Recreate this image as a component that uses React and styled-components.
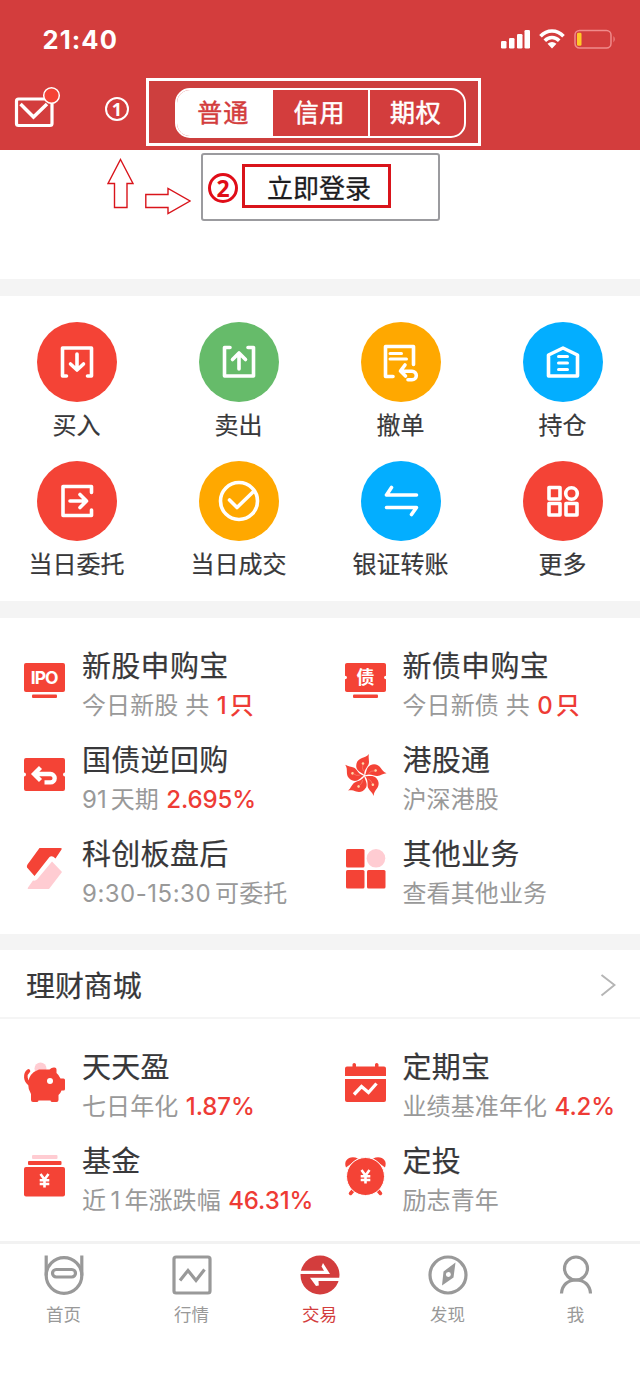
import React from "react";
import styled, { createGlobalStyle } from "styled-components";

const RED = "#f44336";
const BRAND = "#d33d3d";
const PINK = "#ffccd2";

const GlobalStyle = createGlobalStyle`
  * { box-sizing: border-box; }
  body {
    margin: 0;
    background: #fff;
    color: #38383a;
    font-family: Inter, "Noto Sans CJK SC", sans-serif;
  }
  svg { display: block; flex: none; }
`;

const Page = styled.div`
  width: 640px;
  height: 1386px;
  display: flex;
  flex-direction: column;
  overflow: hidden;
  background: #fff;
`;

const Header = styled.header`
  height: 150px;
  flex: none;
  background: ${BRAND};
  color: #fff;
`;

const StatusBar = styled.div`
  height: 78px;
  padding: 0 24px 0 42.5px;
  display: flex;
  justify-content: space-between;
`;

const Clock = styled.div`
  height: 78px;
  line-height: 80px;
  font-size: 25.5px;
  font-weight: 700;
  letter-spacing: 1.1px;
`;

const StatusIcons = styled.div`
  display: flex;
  gap: 9px;
  padding-top: 28px;
`;

const NavBar = styled.div`
  display: flex;
  align-items: flex-start;
`;

const MailSlot = styled.div`
  width: 105px;
  padding: 8px 0 0 14px;
`;

const StepBadge = styled.span`
  width: ${(p) => p.$size}px;
  height: ${(p) => p.$size}px;
  flex: none;
  display: flex;
  align-items: center;
  justify-content: center;
  border: ${(p) => p.$line}px solid currentColor;
  border-radius: 50%;
  color: ${(p) => p.$color};
  font: 700 ${(p) => p.$font}px "Noto Sans", sans-serif;
  line-height: 1;
  margin: ${(p) => p.$margin};
`;

const SegmentFrame = styled.div`
  width: 335px;
  height: 68px;
  border: 3px solid #fff;
  background: #cd3f3e;
  padding: 7px 0 0 26px;
`;

const Segments = styled.div`
  width: 291px;
  height: 50px;
  display: flex;
  border: 2px solid #fff;
  border-radius: 15px;
  overflow: hidden;
  background: ${BRAND};
`;

const Segment = styled.button`
  flex: 1;
  border: 0;
  border-left: ${(p) => (p.$first ? 0 : 2)}px solid #fff;
  padding: 0 2px 5px 0;
  background: ${(p) => (p.$active ? "#fff" : "transparent")};
  color: ${(p) => (p.$active ? BRAND : "#fff")};
  font: 400 25px "Noto Sans CJK SC", sans-serif;
  letter-spacing: 0.8px;
  line-height: 42px;
  -webkit-text-stroke: 0.5px currentColor;
`;

const LoginArea = styled.section`
  height: 129px;
  flex: none;
  display: flex;
  align-items: flex-start;
  padding: 3px 0 0 106px;
`;

const UpArrow = styled.svg`
  margin-top: 5px;
`;

const RightArrow = styled.svg`
  margin: 34px 10px 0 10px;
`;

const LoginBox = styled.div`
  width: 239px;
  height: 68px;
  border: 2px solid #9b9b9f;
  border-radius: 3px;
  display: flex;
  padding: 9px 0 0 5px;
`;

const LoginButton = styled.button`
  width: 149px;
  height: 44px;
  border: 3px solid #d9141b;
  background: #fff;
  padding: 0 0 0 5px;
  color: #1c1c1e;
  font: 400 26px "Noto Sans CJK SC", sans-serif;
  line-height: 37px;
  -webkit-text-stroke: 0.3px currentColor;
`;

const Band = styled.div`
  height: ${(p) => p.$height}px;
  flex: none;
  background: #f4f4f4;
`;

const QuickGrid = styled.section`
  height: 305px;
  flex: none;
  padding: 26px 29.5px 0 28.5px;
  display: grid;
  grid-template-columns: repeat(4, 96px);
  grid-auto-rows: 139px;
  justify-content: space-between;
`;

const QuickItem = styled.div`
  display: flex;
  flex-direction: column;
  align-items: center;
`;

const QuickCircle = styled.div`
  width: 80px;
  height: 80px;
  border-radius: 50%;
  background: ${(p) => p.$color};
  color: #fff;
  flex: none;
`;

const QuickLabel = styled.div`
  height: 40px;
  line-height: 40px;
  margin-top: 2px;
  font-size: 24px;
  font-family: "Noto Sans CJK SC", sans-serif;
  white-space: nowrap;
  -webkit-text-stroke: 0.2px currentColor;
`;

const FeatureGrid = styled.section`
  flex: none;
  height: ${(p) => p.$height}px;
  padding: 26px 0 0 24px;
  display: grid;
  grid-template-columns: 320.5px 1fr;
  grid-auto-rows: 80px;
  row-gap: 14px;
`;

const FeatureItem = styled.div`
  display: flex;
  gap: 17px;
  min-width: 0;
`;

const FeatureIcon = styled.svg`
  margin-top: 16px;
  overflow: visible;
`;

const FeatureTitle = styled.div`
  height: 40px;
  line-height: 40px;
  font-size: 29px;
  font-family: "Noto Sans CJK SC", sans-serif;
  letter-spacing: ${(p) => (p.$tight ? -0.1 : 0.3)}px;
  white-space: nowrap;
  -webkit-text-stroke: 0.2px currentColor;
`;

const FeatureNote = styled.div`
  height: 40px;
  line-height: 40px;
  margin-top: 2px;
  font-size: 24px;
  letter-spacing: 0.1px;
  color: #999;
  white-space: nowrap;
`;

const Digits = styled.span`
  letter-spacing: ${(p) => (p.$long ? 0.5 : 0)}px;
  margin-left: ${(p) => (p.$before ? 4.5 : 0)}px;
  margin-right: ${(p) => (p.$after ? 4 : 0)}px;
`;

const Accent = styled.span`
  margin-left: 0.6px;
  color: #ee3b35;
  font-weight: 500;

  ${Digits} {
    letter-spacing: -0.1px;
    margin-right: ${(p) => (p.$counted ? 3 : 0)}px;
  }
`;

const MallHeader = styled.div`
  height: 69px;
  flex: none;
  padding: 0 24px 0 26px;
  display: flex;
  align-items: center;
  justify-content: space-between;
  border-bottom: 2px solid #f5f5f5;
`;

const MallArrow = styled.svg`
  margin-top: 2px;
`;

const TabBar = styled.nav`
  height: 145px;
  flex: none;
  border-top: 3px solid #f2f2f2;
  display: flex;
`;

const Tab = styled.div`
  flex: 1;
  display: flex;
  flex-direction: column;
  align-items: center;
  padding-top: 11px;
  color: ${(p) => (p.$active ? BRAND : "#999")};
`;

const TabLabel = styled.div`
  font: 400 17.5px "Noto Sans CJK SC", sans-serif;
  line-height: 30px;
  margin-top: 4px;
  padding-right: 1px;
`;

const quickIcons = {
  buy: (
    <path d="M32.5 54.5H28.500V26.500h29V54.500H53.500M43 32.500V47.500M36.500 42.500l6.500 6 6.500-6" transform="translate(-3 -.5)" />
  ),
  sell: (
    <path d="M31 25.500h-5.500V54h29V25.500H49M40 47V31.500M33.500 37.500 40 31l6.500 6.500" />
  ),
  cancel: (
    <>
      <path d="M32 54.500H24.500V24.500h28v18" />
      <path d="M29 31.500h11.500M29 37h16.500" strokeWidth="3" />
      <path d="M44 43 39.500 49l5 5M40.500 49.200H51a4.300 4.300 0 0 1 0 8.600h-4" />
    </>
  ),
  hold: (
    <>
      <path d="M25.500 54V33L40 26l14.500 7v21z" />
      <path d="M35.500 34.500h9M35.500 41h9M35.500 47.500h9" strokeWidth="3" />
    </>
  ),
  orders: (
    <path d="M54.500 31.500V25.500H26v29h28.500V49M33 40h16M43 33.500 49.500 40 43 46.500" />
  ),
  deals: (
    <>
      <circle cx="40" cy="40" r="18.500" />
      <path d="M30.500 39 38 46.500 54 31" />
    </>
  ),
  transfer: (
    <path d="M30.500 26.500 25.500 34H55.500M25.500 46.500h30L50.500 53.500" />
  ),
  more: (
    <>
      <rect x="26" y="26.500" width="11" height="11.500" />
      <circle cx="48.500" cy="32.500" r="5.800" />
      <rect x="26" y="42.500" width="11" height="11.500" />
      <rect x="43" y="42.500" width="11" height="11.500" />
    </>
  ),
};

const QuickGlyph = ({ name }) => (
  <svg width="80" height="80" fill="none" stroke="currentColor" strokeWidth="3.600" strokeLinecap="round" strokeLinejoin="round">
    {quickIcons[name]}
  </svg>
);

const Yen = ({ x, y }) => (
  <path
    d="M-4-6.500 0-1 4-6.500M0-1V7M-4.800-.3H4.800M-4.800 3.500H4.800"
    transform={`translate(${x} ${y})`}
    stroke="#fff"
    strokeWidth="2.600"
    fill="none"
  />
);

const TICKET = "M2 0H39a2 2 0 0 1 2 2V14.500a2 2 0 0 0 0 4V31a2 2 0 0 1-2 2H2a2 2 0 0 1-2-2V18.500a2 2 0 0 0 0-4V2a2 2 0 0 1 2-2z";
const PETAL = "M19.300 21C16.500 18.500 12 17.500 11.300 13C10.800 8 13.500 5.200 17 4C20 3 22 2.500 24 0C23 3.500 24.500 6 23.800 9.500C23 13 19 15 19.300 21z";

const featureIcons = {
  ipo: (
    <>
      <rect x="0" y="3" width="41" height="29" rx="2" fill={RED} />
      <rect x="8" y="34.500" width="25" height="3.500" rx="1" fill={RED} />
      <text x="20.200" y="23.800" textAnchor="middle" fill="#fff" fontFamily="Inter" fontWeight="700" fontSize="17.500" letterSpacing="-0.900">IPO</text>
    </>
  ),
  bond: (
    <>
      <path d={TICKET} transform="translate(0 3) scale(1 .88)" fill={RED} />
      <rect x="8" y="34.500" width="25" height="3.500" rx="1" fill={RED} />
      <text x="20.500" y="24" textAnchor="middle" fill="#fff" fontFamily="Noto Sans CJK SC" fontWeight="700" fontSize="18">债</text>
    </>
  ),
  repo: (
    <>
      <path d={TICKET} transform="translate(0 4)" fill={RED} />
      <path d="M16.500 13.500 10 20 16.500 26.500M11 20H26.500a4.200 4.200 0 0 1 0 8.400H20.500" stroke="#fff" strokeWidth="4.300" fill="none" />
    </>
  ),
  hk: (
    <>
      {[0, 72, 144, 216, 288].map((a) => (
        <g key={a} transform={`rotate(${a} 19.500 21.700)`}>
          <path d={PETAL} fill={RED} />
          <path d="M18.500 17Q16.500 14 18 10.500" stroke="#f98a78" strokeWidth=".6" fill="none" />
          <circle cx="18" cy="9.500" r="1.300" fill="#ffd9a8" />
        </g>
      ))}
    </>
  ),
  star: (
    <>
      <path d="M25 41H4.500Q3 41 4 39.500L9 32.500Q11.500 33 13 31.500L28 13.500 38 24z" fill={PINK} />
      <path d="M15.500 0H36.500Q38.500 0 37.500 1.500L31.500 10.500Q28 7 25.500 9L10.500 28 3 19.500Q2.500 18 3.500 16.500z" fill={RED} />
    </>
  ),
  other: (
    <>
      <rect x="1" y="1" width="18.500" height="18.500" rx="1.500" fill={RED} />
      <circle cx="31" cy="10.300" r="9.300" fill={PINK} />
      <rect x="1" y="22" width="18.500" height="18.500" rx="1.500" fill={RED} />
      <rect x="22" y="22" width="18.500" height="18.500" rx="1.500" fill={RED} />
    </>
  ),
  piggy: (
    <>
      <circle cx="16.500" cy="7.500" r="6" fill={PINK} />
      <path d="M4.500 10C.5 13 1 20.500 6 23" stroke={RED} strokeWidth="3.600" strokeLinecap="round" fill="none" />
      <path d="M15 8.500H25.500Q28 6 30.500 6.500 32.500 6.500 32.500 8.500V12Q35 14 36.500 17.500H39.500Q41 17.500 41 19V28Q41 29.500 39.500 29.500H37.500Q36.500 32.500 34.500 34V39Q34.500 41 32.500 41H28.500Q26.500 41 26.500 39.500H14.500Q14.500 41 12.500 41H9Q7 41 7 39V33Q4 28 4 22 5 12 15 8.500z" fill={RED} />
      <circle cx="26" cy="20" r="3" fill="#fff" />
    </>
  ),
  calendar: (
    <>
      <path d="M2 5.500H7.500V3.500Q7.500 2 9.200 2T11 3.500V5.500H30V3.500Q30 2 31.700 2T33.500 3.500V5.500H39Q41 5.500 41 7.500V15H0V7.500Q0 5.500 2 5.500z" fill={RED} />
      <path d="M0 18H41V39Q41 41 39 41H2Q0 41 0 39z" fill={RED} />
      <path d="M9 33.500 16.500 25.500 23.500 31.500 31.500 22.500" stroke="#fff" strokeWidth="3.300" fill="none" />
    </>
  ),
  fund: (
    <>
      <rect x="8" y="0" width="25.500" height="4" rx="1" fill={PINK} />
      <rect x="4" y="6" width="33.500" height="4" rx="1" fill={RED} />
      <rect x="0" y="12" width="41" height="29.500" rx="2" fill={RED} />
      <Yen x={20.5} y={25.5} />
    </>
  ),
  alarm: (
    <>
      <path d="M1 12.500C-2 5 5 0 13 3.500zM40 12.500C43 5 36 0 28 3.500z" fill={RED} />
      <path d="M8.500 35 5.500 38.500M32.500 35l3 3.500" stroke={RED} strokeWidth="3.500" strokeLinecap="round" />
      <circle cx="20.500" cy="21.500" r="19" fill={RED} stroke="#fff" strokeWidth="1" />
      <Yen x={20.5} y={21.5} />
    </>
  ),
};

const tabIcons = {
  home: (
    <>
      <path d="M2.200.5V20.500M37.800.5V20.500" />
      <circle cx="20" cy="20.500" r="17.800" />
      <rect x="8.500" y="14.500" width="23" height="7.500" rx="3.700" />
    </>
  ),
  market: (
    <>
      <rect x="2" y="2" width="36" height="36" rx="2" />
      <path d="M8 25.500 16 15.500 24 25.500 32.500 14.500" />
    </>
  ),
  trade: (
    <>
      <circle cx="20" cy="20" r="19.500" fill={BRAND} stroke="none" />
      <path d="M0 15.800H24L21.500 11.500 23 8 30 19H0zM40 26H18.500L18.800 30.500 16 31 10 22.700H40z" fill="#fff" stroke="none" />
    </>
  ),
  discover: (
    <>
      <circle cx="20" cy="20" r="18" />
      <path fillRule="evenodd" d="M27.500 7.500 25.500 22.500 14 30.500 15.500 16.500zM20.300 17a2.500 2.500 0 1 0 .1 5 2.500 2.500 0 0 0-.1-5z" fill="currentColor" stroke="none" />
    </>
  ),
  me: (
    <>
      <circle cx="20" cy="13.500" r="11.500" />
      <path d="M5.500 38.500C6 30 12 25 20 25S34 30 34.500 38.500" />
    </>
  ),
};

const quickActions = [
  { label: "买入", icon: "buy", color: RED },
  { label: "卖出", icon: "sell", color: "#66bb6a" },
  { label: "撤单", icon: "cancel", color: "#ffa800" },
  { label: "持仓", icon: "hold", color: "#03aeff" },
  { label: "当日委托", icon: "orders", color: RED },
  { label: "当日成交", icon: "deals", color: "#ffa800" },
  { label: "银证转账", icon: "transfer", color: "#03aeff" },
  { label: "更多", icon: "more", color: RED },
];

const business = [
  { title: "新股申购宝", note: "今日新股 共 ", accent: "1只", icon: "ipo" },
  { title: "新债申购宝", note: "今日新债 共 ", accent: "0只", icon: "bond" },
  { title: "国债逆回购", note: "91天期 ", accent: "2.695%", icon: "repo" },
  { title: "港股通", note: "沪深港股", icon: "hk" },
  { title: "科创板盘后", note: "9:30-15:30可委托", icon: "star" },
  { title: "其他业务", note: "查看其他业务", icon: "other" },
];

const wealth = [
  { title: "天天盈", note: "七日年化 ", accent: "1.87%", icon: "piggy" },
  { title: "定期宝", note: "业绩基准年化 ", accent: "4.2%", icon: "calendar" },
  { title: "基金", note: "近1年涨跌幅 ", accent: "46.31%", icon: "fund" },
  { title: "定投", note: "励志青年", icon: "alarm" },
];

const tabs = [
  { label: "首页", icon: "home" },
  { label: "行情", icon: "market" },
  { label: "交易", icon: "trade", active: true },
  { label: "发现", icon: "discover" },
  { label: "我", icon: "me" },
];

// Adds breathing room where digits meet Chinese characters.
const Mixed = ({ text }) => {
  const parts = text.split(/([\d:.%-]+)/).filter(Boolean);
  return parts.map((part, i) =>
    /^\d/.test(part) ? (
      <Digits key={i} $long={part.length > 6} $before={i > 0} $after={i < parts.length - 1}>
        {part}
      </Digits>
    ) : (
      part
    )
  );
};

const Features = ({ items, height }) => (
  <FeatureGrid $height={height}>
    {items.map((f) => (
      <FeatureItem key={f.title}>
        <FeatureIcon width="41" height="41">{featureIcons[f.icon]}</FeatureIcon>
        <div>
          <FeatureTitle>{f.title}</FeatureTitle>
          <FeatureNote>
            <Mixed text={f.note} />
            {f.accent && (
              <Accent $counted={f.accent.endsWith("只")}>
                <Mixed text={f.accent} />
              </Accent>
            )}
          </FeatureNote>
        </div>
      </FeatureItem>
    ))}
  </FeatureGrid>
);

export default function App() {
  return (
    <Page>
      <GlobalStyle />
      <Header>
        <StatusBar>
          <Clock>21:40</Clock>
          <StatusIcons>
            <svg width="30" height="21" fill="#fff">
              <rect x="1" y="13" width="5.500" height="7.500" rx="1.300" />
              <rect x="9" y="10" width="5.500" height="10.500" rx="1.300" />
              <rect x="17" y="6" width="5.500" height="14.500" rx="1.300" />
              <rect x="24.500" y="2" width="5.500" height="18.500" rx="1.300" />
            </svg>
            <svg width="26" height="21" fill="none" stroke="#fff" strokeWidth="3.600">
              <path d="M1.500 8.200C8 1.200 18 1.200 24.500 8.200M5.800 12.700C10 8.500 16 8.500 20.200 12.700" />
              <path d="M8.500 15.800Q13 12 17.500 15.800L13 20.500z" fill="#fff" stroke="none" />
            </svg>
            <svg width="42" height="21">
              <rect x="1" y="2.500" width="36" height="17.500" rx="4.500" fill="none" stroke="#f08b8b" strokeWidth="1.500" />
              <rect x="3" y="4.800" width="4.500" height="13" rx="1.300" fill="#ffc928" />
              <path d="M39.500 8Q42 11 39.500 14.500z" fill="#f08b8b" />
            </svg>
          </StatusIcons>
        </StatusBar>
        <NavBar>
          <MailSlot>
            <svg width="47" height="43" fill="none" stroke="#fff" strokeWidth="3.200">
              <rect x="2.500" y="13" width="35.500" height="26.500" rx="2" />
              <path d="M6.500 18 19.500 31 33 18" strokeWidth="3.500" />
              <circle cx="37.500" cy="9.500" r="7.800" fill="#f44336" strokeWidth="1.500" />
            </svg>
          </MailSlot>
          <StepBadge $size={24} $line={2} $font={18} $color="#fff" $margin="19px 17px 0 0">1</StepBadge>
          <SegmentFrame>
            <Segments>
              <Segment $first $active>普通</Segment>
              <Segment>信用</Segment>
              <Segment>期权</Segment>
            </Segments>
          </SegmentFrame>
        </NavBar>
      </Header>

      <LoginArea>
        <UpArrow width="29" height="52" fill="none" stroke="#d9141b" strokeWidth="1.400">
          <path d="M14.500 1.500 27 25.500H21V49.500H8.500V25.500H2z" />
        </UpArrow>
        <RightArrow width="46" height="28" fill="none" stroke="#d9141b" strokeWidth="1.400">
          <path d="M.8 7.500H23V1.500L45 14 23 26.500V20.500H.8z" />
        </RightArrow>
        <LoginBox>
          <StepBadge $size={30} $line={3} $font={23} $color="#e00d18" $margin="9px 4px 0 0">2</StepBadge>
          <LoginButton>立即登录</LoginButton>
        </LoginBox>
      </LoginArea>

      <Band $height={17} />
      <QuickGrid>
        {quickActions.map((q) => (
          <QuickItem key={q.label}>
            <QuickCircle $color={q.color}><QuickGlyph name={q.icon} /></QuickCircle>
            <QuickLabel>{q.label}</QuickLabel>
          </QuickItem>
        ))}
      </QuickGrid>
      <Band $height={17} />
      <Features items={business} height={316} />
      <Band $height={16} />
      <MallHeader>
        <FeatureTitle $tight>理财商城</FeatureTitle>
        <MallArrow width="16" height="24" fill="none" stroke="#b5b5b5" strokeWidth="2">
          <path d="M1.500 2 14.500 12 1.500 22.500" />
        </MallArrow>
      </MallHeader>
      <Features items={wealth} height={222} />
      <TabBar>
        {tabs.map((t) => (
          <Tab key={t.label} $active={t.active}>
            <svg width="40" height="40" fill="none" stroke="currentColor" strokeWidth="3.200">
              {tabIcons[t.icon]}
            </svg>
            <TabLabel>{t.label}</TabLabel>
          </Tab>
        ))}
      </TabBar>
    </Page>
  );
}
